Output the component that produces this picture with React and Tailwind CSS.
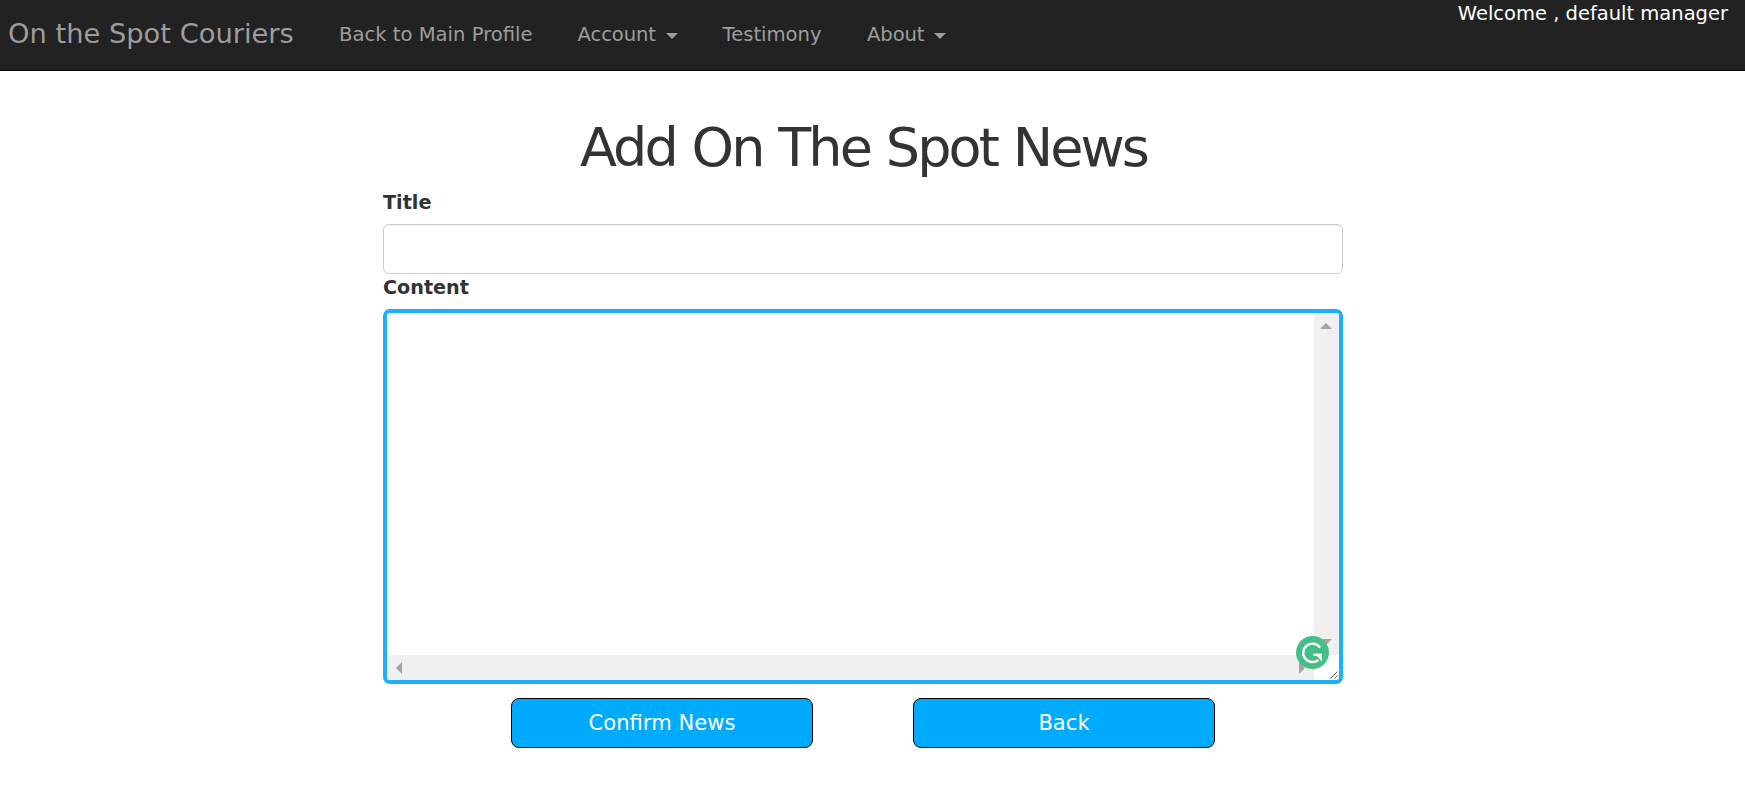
import React from "react";

function Caret() {
  return (
    <span className="ml-[10px] mt-[3px] h-0 w-0 border-x-[6px] border-t-[6px] border-x-transparent border-t-[#9d9d9d]" />
  );
}

function NavItem({ children, caret, className = "" }) {
  return (
    <a href="#" className={`flex items-center whitespace-nowrap pt-0.5 text-[#9d9d9d] ${className}`}>
      {children}
      {caret && <Caret />}
    </a>
  );
}

function Navbar() {
  return (
    <nav className="flex h-[71px] justify-between border-b border-[#080808] bg-[#222222]">
      <div className="flex h-[68px] items-center text-[19.6px]">
        <a href="#" className="ml-2 w-[331px] whitespace-nowrap text-[27.3px] text-[#9d9d9d]">
          On the Spot Couriers
        </a>
        <NavItem className="w-[238.5px]">Back to Main Profile</NavItem>
        <NavItem className="w-[145px] tracking-[-0.1px]" caret>Account</NavItem>
        <NavItem className="w-[144.5px]">Testimony</NavItem>
        <NavItem className="tracking-[-0.1px]" caret>About</NavItem>
      </div>
      <p className="mr-[17px] whitespace-nowrap text-[19.5px] leading-[28px] text-white">
        Welcome , default manager
      </p>
    </nav>
  );
}

function GrammarBadge() {
  return (
    <svg className="absolute right-[10.5px] bottom-[11px] h-[33px] w-[33px]" viewBox="0 0 33 33" fill="none">
      <circle cx="16.5" cy="16.5" r="16.5" fill="#43bf87" />
      <path d="M24 11.6A9.2 9.2 0 1 0 22.4 23.8M17.2 18.9H24.5" stroke="#fff" strokeWidth="2.4" />
      <path d="M18.8 17.8H26V25.6Z" fill="#fff" />
    </svg>
  );
}

function ContentArea() {
  return (
    <div className="relative grid h-[375px] grid-cols-[1fr_25px] grid-rows-[1fr_25px] overflow-hidden rounded-[7px] border-4 border-[#1cb0ff] bg-white">
      <div className="shadow-[inset_0_1px_1px_rgba(0,0,0,0.075)]" />
      <div className="flex flex-col items-center justify-between bg-[#f0f0f0] py-[10px] pr-px">
        <span className="h-0 w-0 border-x-[6px] border-b-[6px] border-x-transparent border-b-[#a3a3a3]" />
        <span className="h-0 w-0 border-x-[6px] border-t-[6px] border-x-transparent border-t-[#a3a3a3]" />
      </div>
      <div className="flex items-center justify-between bg-[#f0f0f0] pr-[9px] pl-[9px]">
        <span className="h-0 w-0 border-y-[6px] border-r-[6px] border-y-transparent border-r-[#a3a3a3]" />
        <span className="h-0 w-0 border-y-[6px] border-l-[6px] border-y-transparent border-l-[#a3a3a3]" />
      </div>
      <div className="flex items-end justify-end bg-white pr-px pb-px">
        <svg className="h-[8px] w-[8px]" viewBox="0 0 8 8" stroke="#666" strokeWidth="1">
          <path d="M0.5 7.5L7.5 .5M4.5 7.5L7.5 4.5" />
        </svg>
      </div>
      <GrammarBadge />
    </div>
  );
}

function ActionButton({ children }) {
  return (
    <button className="h-[50px] w-[302px] rounded-[8px] border border-black bg-[#00aaff] pt-px pb-px text-[21.1px] leading-[30px] text-white">
      {children}
    </button>
  );
}

export default function App() {
  return (
    <div className="min-h-[790px] bg-white font-['DejaVu_Sans',sans-serif] text-[#333333]">
      <Navbar />
      <main className="mr-[402px] ml-[383px] flex w-[960px] flex-col pt-[49px]">
        <h1 className="h-[69px] pl-px text-center text-[54px] leading-[56px] tracking-[-2.9px] whitespace-nowrap [word-spacing:1.5px]">
          Add On The Spot News
        </h1>
        <label className="h-[35px] text-[19.2px] leading-[28px] font-bold">Title</label>
        <input className="h-[50px] rounded-[6px] border border-[#cccccc] bg-white px-4 shadow-[inset_0_1px_1px_rgba(0,0,0,0.075)] outline-none" />
        <label className="h-[35px] text-[19.2px] leading-[28px] font-bold">Content</label>
        <ContentArea />
        <div className="flex justify-center gap-[100px] pt-[14px]">
          <ActionButton>Confirm News</ActionButton>
          <ActionButton>Back</ActionButton>
        </div>
      </main>
    </div>
  );
}
